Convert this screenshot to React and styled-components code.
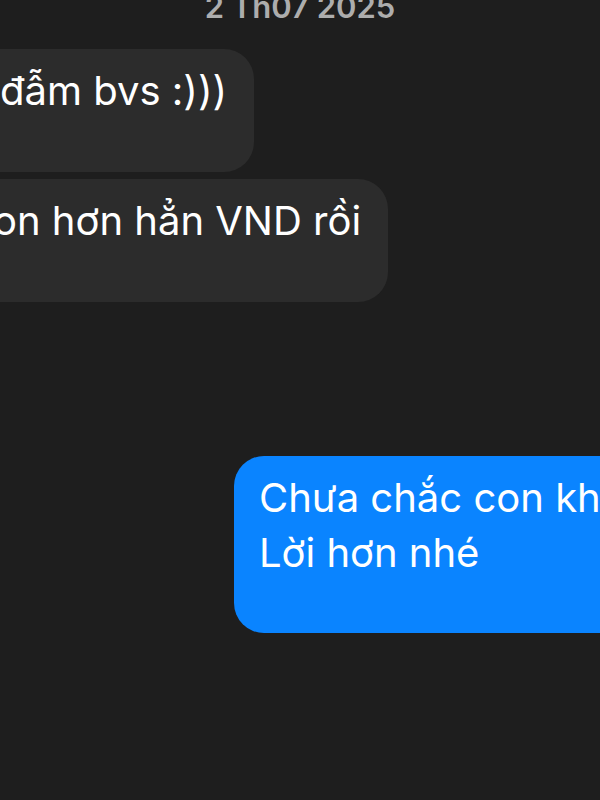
import React from 'react';
import styled, { createGlobalStyle } from 'styled-components';

const GlobalStyle = createGlobalStyle`
  html, body {
    margin: 0;
    padding: 0;
    background: #1e1e1e;
  }
  body {
    font-family: Inter, "Noto Sans", "Liberation Sans", sans-serif;
  }
`;

const StyledScreen = styled.div`
  width: 600px;
  height: 800px;
  overflow: hidden;
  background: #1e1e1e;
  display: flex;
  flex-direction: column;
`;

const StyledStamp = styled.div`
  margin-top: -13px;
  text-align: center;
  font-size: 31px;
  line-height: 40px;
  font-weight: 600;
  color: #adadad;
`;

const StyledThread = styled.div`
  display: flex;
  flex-direction: column;
  gap: 7px;
  margin-top: 22px;
`;

const StyledRow = styled.div`
  display: flex;
  justify-content: flex-start;
  padding-left: ${({ outgoing }) => (outgoing ? '234px' : '0')};
  margin-top: ${({ spaced }) => (spaced ? '147px' : '0')};
`;

const StyledBubble = styled.div`
  flex: none;
  white-space: pre;
  font-size: 40px;
  line-height: 55px;
  color: #fff;
  background: ${({ outgoing }) => (outgoing ? '#0a84ff' : '#2c2c2c')};
  padding: ${({ outgoing }) => (outgoing ? '14px 40px 53px 25px' : '14px 27px 54px 0')};
  margin-left: ${({ shift }) => shift || 0}px;
  border-radius: ${({ outgoing }) => (outgoing ? '30px 0 0 30px' : '0 30px 30px 0')};
`;

const App = () => (
  <>
    <GlobalStyle />
    <StyledScreen>
      <StyledStamp>2 Th07 2025</StyledStamp>
      <StyledThread>
        <StyledRow>
          <StyledBubble>đẫm bvs :)))</StyledBubble>
        </StyledRow>
        <StyledRow>
          <StyledBubble shift={-7}>on hơn hẳn VND rồi</StyledBubble>
        </StyledRow>
        <StyledRow outgoing spaced>
          <StyledBubble outgoing>{'Chưa chắc con khôn đâu\nLời hơn nhé'}</StyledBubble>
        </StyledRow>
      </StyledThread>
    </StyledScreen>
  </>
);

export default App;
